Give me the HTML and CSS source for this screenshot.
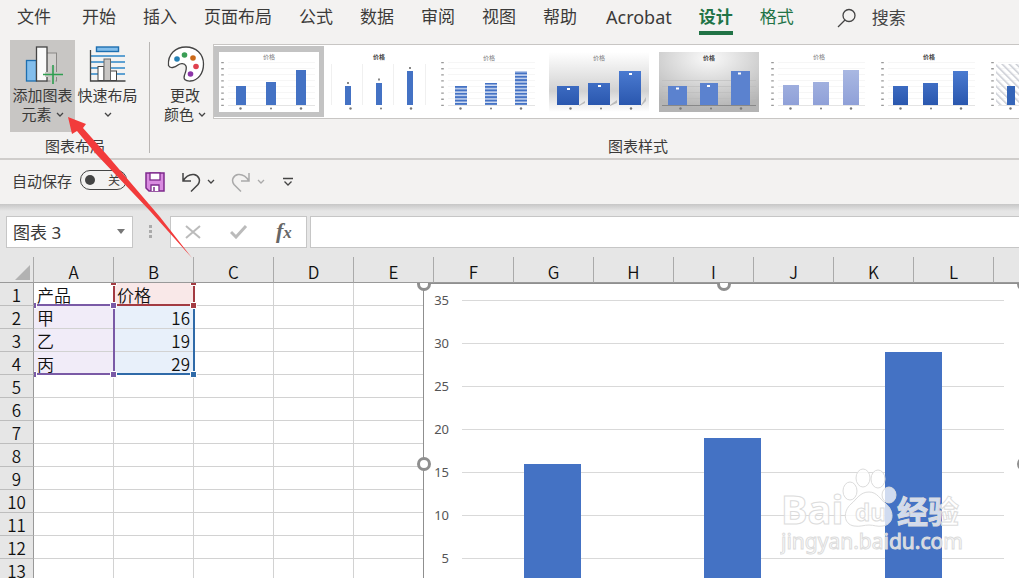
FILE: index.html
```html
<!DOCTYPE html>
<html lang="zh-CN">

<head>
    <meta charset="UTF-8">
    <meta name="viewport" content="width=device-width, initial-scale=1.0">
    <title>图表 3</title>
    <link rel="stylesheet" href="styles.css">
</head>

<body>
    <nav class="tabs">
        <button class="tab tab-file">文件</button>
        <button class="tab">开始</button>
        <button class="tab">插入</button>
        <button class="tab">页面布局</button>
        <button class="tab">公式</button>
        <button class="tab">数据</button>
        <button class="tab">审阅</button>
        <button class="tab">视图</button>
        <button class="tab">帮助</button>
        <button class="tab tab-latin">Acrobat</button>
        <button class="tab active">设计</button>
        <button class="tab context">格式</button>
        <label class="search">
            <svg width="20" height="20" viewBox="0 0 20 20" fill="none" stroke="#444" stroke-width="1.3">
                <circle cx="12" cy="7.5" r="6" />
                <path d="M8 12L1 19" />
            </svg>
            <input type="text" placeholder="搜索" aria-label="搜索">
        </label>
    </nav>

    <section class="ribbon">
        <div class="group">
            <div class="group-body">
                <button class="big-button pressed">
                    <svg width="40" height="40" viewBox="0 0 40 40">
                        <rect x="23.5" y="9" width="10" height="28" fill="#d2d0ce" stroke="#8a8886" />
                        <rect x="3.5" y="16.5" width="10" height="20.500" fill="#83beec" stroke="#1e6fb0" stroke-width="1.3" />
                        <rect x="13.5" y="3" width="10.500" height="34" fill="#fafafa" stroke="#444" stroke-width="1.3" />
                        <path d="M30 22v18M22 30.500h17" stroke="#c8c6c4" stroke-width="5" />
                        <path d="M30 21v19M20 30.500h20" stroke="#2f9e50" stroke-width="1.6" />
                    </svg>
                    <span>添加图表</span>
                    <span>元素<svg class="chevron" width="8" height="6" viewBox="0 0 8 6"><path d="M1 1l3 3 3-3" /></svg></span>
                </button>
                <button class="big-button">
                    <svg width="40" height="40" viewBox="0 0 40 40">
                        <path d="M2 12h35M2 18h35M2 24h35M2 30h35" stroke="#2e87c8" stroke-width="1.5" />
                        <rect x="8.500" y="3" width="22" height="4.500" fill="#83beec" stroke="#1e6fb0" stroke-width="1.4" />
                        <rect x="10" y="22.500" width="6" height="14" fill="#fff" stroke="#444" />
                        <rect x="22.500" y="27" width="6" height="9.500" fill="#fff" stroke="#444" />
                        <rect x="16" y="15" width="6.500" height="21.500" fill="#c8c6c4" stroke="#666" />
                        <path d="M2.500 6v31h35" fill="none" stroke="#444" stroke-width="1.3" />
                    </svg>
                    <span>快速布局</span>
                    <span><svg class="chevron" width="8" height="6" viewBox="0 0 8 6"><path d="M1 1l3 3 3-3" /></svg></span>
                </button>
            </div>
            <div class="group-name">图表布局</div>
        </div>

        <div class="divider"></div>

        <div class="group">
            <div class="group-body">
                <button class="big-button narrow">
                    <svg width="40" height="40" viewBox="0 0 40 40">
                        <path d="M3.500 21.500C2.500 10 10.500 3 21 3c10 0 17.500 7 17.500 17 0 9.500-5.500 16.500-13 17-5 .3-7.500-1.500-6-6 1.500-4 2.500-6 1.500-9-1.500-3-5.500-3-8-1-3 2.500-8 4-9.500.5z" fill="#fff" stroke="#444" stroke-width="1.3" />
                        <circle cx="12" cy="15" r="2.800" fill="#2580b5" />
                        <circle cx="19.500" cy="11" r="2.800" fill="#3a9e55" />
                        <circle cx="28" cy="14" r="2.800" fill="#cc6a1a" />
                        <circle cx="31" cy="22.500" r="2.800" fill="#e0414e" />
                        <circle cx="25.500" cy="30" r="2.800" fill="#8c35a8" />
                    </svg>
                    <span>更改</span>
                    <span>颜色<svg class="chevron" width="8" height="6" viewBox="0 0 8 6"><path d="M1 1l3 3 3-3" /></svg></span>
                </button>

                <!-- shared parts of the style previews -->
                <svg width="0" height="0" class="defs">
                    <defs>
                        <linearGradient id="shade" x2="0" y2="1">
                            <stop offset="0" stop-color="#4a7ad0" />
                            <stop offset="1" stop-color="#2a57ae" />
                        </linearGradient>
                        <linearGradient id="pale" x2="0" y2="1">
                            <stop offset="0" stop-color="#a9b8e2" />
                            <stop offset="1" stop-color="#8fa0d8" />
                        </linearGradient>
                        <linearGradient id="floor" x2="0" y2="1">
                            <stop offset="0" stop-color="#fff" />
                            <stop offset=".65" stop-color="#d2d2d2" />
                            <stop offset="1" stop-color="#fff" />
                        </linearGradient>
                        <radialGradient id="spot" cx=".5" cy=".1" r=".85">
                            <stop offset="0" stop-color="#fafafa" />
                            <stop offset="1" stop-color="#b4b4b4" />
                        </radialGradient>
                        <pattern id="stripes" width="4" height="3.400" patternUnits="userSpaceOnUse">
                            <rect width="4" height="3.400" fill="#d5dff3" />
                            <rect width="4" height="2" fill="#4472c4" />
                        </pattern>
                        <pattern id="hatch" width="5" height="5" patternUnits="userSpaceOnUse" patternTransform="rotate(-45)">
                            <rect width="1.500" height="5" fill="#c9ccd3" />
                        </pattern>
                        <g id="scale">
                            <path d="M9 10.500h87M9 16.500h87M9 22.500h87M9 28.500h87M9 34.500h87M9 40.500h87M9 46.500h87" stroke="#f0f0f0" stroke-width=".6" />
                            <path d="M9 53.500h87" stroke="#ddd" stroke-width=".8" />
                            <path d="M3.500 10v44" stroke="#999" stroke-width="2.600" stroke-dasharray="1.300 4.800" />
                        </g>
                        <g id="names" fill="#777">
                            <circle cx="21.500" cy="56.500" r="1.200" />
                            <circle cx="52" cy="56.500" r="1" />
                            <circle cx="82" cy="56.500" r="1.200" />
                        </g>
                    </defs>
                </svg>

                <div class="gallery">
                    <button class="thumb selected" aria-label="样式 1">
                        <svg width="100" height="60" viewBox="0 0 100 60">
                            <use href="#scale" /><use href="#names" />
                            <text x="50" y="7">价格</text>
                            <path d="M17 34h10v19H17zM47 30h10v23H47zM77 18h10v35H77z" fill="#4472c4" />
                        </svg>
                    </button>
                    <button class="thumb" aria-label="样式 2">
                        <svg width="100" height="60" viewBox="0 0 100 60">
                            <use href="#names" />
                            <text x="50" y="7" class="strong">价格</text>
                            <path d="M2.500 12v41M33.500 12v41M64.500 12v41M96.500 12v41" stroke="#f0f0f0" />
                            <path d="M16 34h6v19h-6zM47 31h6v22h-6zM78 19h6v34h-6z" fill="#4472c4" />
                            <path d="M18 31h2M49 27.500h2M80 16h2" stroke="#888" stroke-width="2" />
                        </svg>
                    </button>
                    <button class="thumb" aria-label="样式 3">
                        <svg width="100" height="60" viewBox="0 0 100 60">
                            <use href="#scale" /><use href="#names" />
                            <text x="50" y="8">价格</text>
                            <path d="M16 34h12v19H16zM46 31h12v22H46zM76 19h12v34H76z" fill="url(#stripes)" />
                        </svg>
                    </button>
                    <button class="thumb" aria-label="样式 4">
                        <svg width="100" height="60" viewBox="0 0 100 60">
                            <rect width="100" height="60" fill="url(#floor)" />
                            <use href="#names" />
                            <text x="50" y="8">价格</text>
                            <path d="M30 53l6-4v2l-6 3zM61 53l7-5v3l-7 3zM92 53l5-8v4l-5 5z" fill="#bbb" />
                            <path d="M8 34h22v19H8zM39 31h22v22H39zM70 19h22v34H70z" fill="url(#shade)" />
                            <path d="M18 37h3M49 34h3M80 22h3" stroke="#fff" stroke-width="2" />
                        </svg>
                    </button>
                    <button class="thumb" aria-label="样式 5">
                        <svg width="100" height="60" viewBox="0 0 100 60">
                            <rect width="100" height="60" fill="url(#spot)" />
                            <path d="M3 28.500h94M3 34.500h94M3 40.500h94M3 46.500h94" stroke="#bbb" stroke-width=".6" />
                            <path d="M3 53.500h94" stroke="#888" />
                            <use href="#names" />
                            <text x="50" y="8" class="strong">价格</text>
                            <path d="M9 34h19v19H9zM41 31h18v22H41zM72 19h19v34H72z" fill="#5b82cf" />
                            <path d="M17 36.500h3M48 34h3M79 21.500h3" stroke="#fff" stroke-width="2" />
                        </svg>
                    </button>
                    <button class="thumb" aria-label="样式 6">
                        <svg width="100" height="60" viewBox="0 0 100 60">
                            <use href="#scale" /><use href="#names" />
                            <text x="50" y="7">价格</text>
                            <path d="M14 33h16v20H14zM44 30h16v23H44zM74 18h16v35H74z" fill="url(#pale)" />
                        </svg>
                    </button>
                    <button class="thumb" aria-label="样式 7">
                        <svg width="100" height="60" viewBox="0 0 100 60">
                            <use href="#scale" /><use href="#names" />
                            <text x="50" y="7" class="strong">价格</text>
                            <path d="M14 34h15v19H14zM44 31h15v22H44zM74 19h15v34H74z" fill="url(#shade)" />
                        </svg>
                    </button>
                    <button class="thumb" aria-label="样式 8">
                        <svg width="100" height="60" viewBox="0 0 100 60">
                            <use href="#scale" /><use href="#names" />
                            <rect x="7" y="12" width="90" height="41" fill="url(#hatch)" />
                            <path d="M18 34h8v19h-8zM48 31h8v22h-8zM78 19h8v34h-8z" fill="#3565b8" />
                        </svg>
                    </button>
                </div>
            </div>
            <div class="group-name">图表样式</div>
        </div>
    </section>

    <section class="quick-access">
        <label class="autosave">
            自动保存
            <span class="switch">
                <input type="checkbox">
                <span>关</span>
            </span>
        </label>
        <button class="icon-button save" aria-label="保存">
            <svg width="20" height="20" viewBox="0 0 20 20">
                <path d="M1 1h18v18H4l-3-3z" fill="#d98be0" stroke="#7d2a8c" stroke-width="1.500" />
                <rect x="5" y="1" width="10" height="7" fill="#fff" stroke="#7d2a8c" stroke-width="1.300" />
                <path d="M6 19v-6h8v6" fill="#fff" stroke="#7d2a8c" stroke-width="1.300" />
                <path d="M9 15v4" stroke="#7d2a8c" stroke-width="1.500" />
            </svg>
        </button>
        <button class="icon-button undo" aria-label="撤消">
            <svg width="20" height="20" viewBox="0 0 20 20" fill="none" stroke="#444" stroke-width="1.500">
                <path d="M2 1v8h8M2 9C5 4 9 2 13 2.500c5 1 7 6 4 10L10 19.500" />
            </svg>
            <svg class="chevron" width="8" height="6" viewBox="0 0 8 6"><path d="M1 1l3 3 3-3" /></svg>
        </button>
        <button class="icon-button redo" aria-label="恢复" disabled>
            <svg width="20" height="20" viewBox="0 0 20 20" fill="none" stroke="#aaa" stroke-width="1.500">
                <path d="M18 1v8h-8M18 9C15 4 11 2 7 2.500c-5 1-7 6-4 10L10 19.500" />
            </svg>
            <svg class="chevron" width="8" height="6" viewBox="0 0 8 6"><path d="M1 1l3 3 3-3" /></svg>
        </button>
        <button class="icon-button more" aria-label="自定义快速访问工具栏">
            <svg width="10" height="10" viewBox="0 0 10 10" fill="none" stroke="#444" stroke-width="1.300">
                <path d="M0 1.500h10M1.500 4.500L5 8l3.500-3.500" />
            </svg>
        </button>
    </section>

    <section class="formula-bar">
        <div class="name-box">
            <input type="text" value="图表 3" aria-label="名称框">
            <svg width="8" height="5" viewBox="0 0 8 5"><path d="M0 0h8L4 5z" fill="#777" /></svg>
        </div>
        <svg class="grip" width="4" height="14" viewBox="0 0 4 14" fill="#aaa">
            <path d="M0 0h3v3H0zM0 5h3v3H0zM0 10h3v3H0z" />
        </svg>
        <div class="formula-buttons">
            <button aria-label="取消">
                <svg width="16" height="14" viewBox="0 0 16 14" stroke="#bbb" stroke-width="2"><path d="M1 1l14 12M15 1L1 13" /></svg>
            </button>
            <button aria-label="输入">
                <svg width="18" height="14" viewBox="0 0 18 14" fill="none" stroke="#bbb" stroke-width="3"><path d="M1 7l5 5L16 1" /></svg>
            </button>
            <button class="fx" aria-label="插入函数">f<small>x</small></button>
        </div>
        <input type="text" class="formula" aria-label="编辑栏">
    </section>

    <main class="sheet">
        <table>
            <thead>
                <tr>
                    <th class="corner"><svg width="15" height="15" viewBox="0 0 15 15"><path d="M15 0v15H0z" fill="#b2b2b2" /></svg></th>
                    <th>A</th><th>B</th><th>C</th><th>D</th><th>E</th><th>F</th><th>G</th>
                    <th>H</th><th>I</th><th>J</th><th>K</th><th>L</th><th></th>
                </tr>
            </thead>
            <tbody>
                <tr><th>1</th><td>产品</td><td class="title-cell">价格</td><td></td><td></td><td></td><td></td><td></td><td></td><td></td><td></td><td></td><td></td><td></td></tr>
                <tr><th>2</th><td class="name-cell">甲</td><td class="value-cell">16</td><td></td><td></td><td></td><td></td><td></td><td></td><td></td><td></td><td></td><td></td><td></td></tr>
                <tr><th>3</th><td class="name-cell">乙</td><td class="value-cell">19</td><td></td><td></td><td></td><td></td><td></td><td></td><td></td><td></td><td></td><td></td><td></td></tr>
                <tr><th>4</th><td class="name-cell">丙</td><td class="value-cell">29</td><td></td><td></td><td></td><td></td><td></td><td></td><td></td><td></td><td></td><td></td><td></td></tr>
                <tr><th>5</th><td></td><td></td><td></td><td></td><td></td><td></td><td></td><td></td><td></td><td></td><td></td><td></td><td></td></tr>
                <tr><th>6</th><td></td><td></td><td></td><td></td><td></td><td></td><td></td><td></td><td></td><td></td><td></td><td></td><td></td></tr>
                <tr><th>7</th><td></td><td></td><td></td><td></td><td></td><td></td><td></td><td></td><td></td><td></td><td></td><td></td><td></td></tr>
                <tr><th>8</th><td></td><td></td><td></td><td></td><td></td><td></td><td></td><td></td><td></td><td></td><td></td><td></td><td></td></tr>
                <tr><th>9</th><td></td><td></td><td></td><td></td><td></td><td></td><td></td><td></td><td></td><td></td><td></td><td></td><td></td></tr>
                <tr><th>10</th><td></td><td></td><td></td><td></td><td></td><td></td><td></td><td></td><td></td><td></td><td></td><td></td><td></td></tr>
                <tr><th>11</th><td></td><td></td><td></td><td></td><td></td><td></td><td></td><td></td><td></td><td></td><td></td><td></td><td></td></tr>
                <tr><th>12</th><td></td><td></td><td></td><td></td><td></td><td></td><td></td><td></td><td></td><td></td><td></td><td></td><td></td></tr>
                <tr><th>13</th><td></td><td></td><td></td><td></td><td></td><td></td><td></td><td></td><td></td><td></td><td></td><td></td><td></td></tr>
            </tbody>
        </table>

        <!-- objects floating over the cells -->
        <div class="objects">
            <svg class="ranges" width="170" height="100" viewBox="0 0 170 100" fill="none" stroke-width="2">
                <path d="M80 2v20M160 2v20M80 22h80" stroke="#a33b42" />
                <path d="M160 24v67H80" stroke="#2f6aa8" />
                <path d="M0 22h80v69H0" stroke="#7a5aa6" />
                <g stroke="#fff" stroke-width="1">
                    <path d="M76.500-2.500h6v5h-6zM156.500-2.500h6v5h-6zM156.500 19.500h6v6h-6z" fill="#a33b42" />
                    <path d="M76.500 19.500h6v6h-6zM76.500 88.500h6v6h-6zM-3.500 19.500h6v6h-6zM-3.500 88.500h6v6h-6z" fill="#7a5aa6" />
                    <path d="M156.500 88.500h6v6h-6z" fill="#2f6aa8" />
                </g>
            </svg>

            <div class="chart">
                <div class="axis">
                    <span>35</span><span>30</span><span>25</span><span>20</span>
                    <span>15</span><span>10</span><span>5</span>
                </div>
                <div class="plot">
                    <div class="lines"><i></i><i></i><i></i><i></i><i></i><i></i><i></i></div>
                    <div class="bars">
                        <div class="bar" style="height: 45.71%"></div>
                        <div class="bar" style="height: 54.29%"></div>
                        <div class="bar" style="height: 82.86%"></div>
                    </div>
                </div>
                <b class="handle top left"></b>
                <b class="handle top center"></b>
                <b class="handle top right"></b>
                <b class="handle middle left"></b>
                <b class="handle middle right"></b>
            </div>
        </div>
    </main>

    <svg class="arrow" width="200" height="270" viewBox="0 0 200 270">
        <path d="M68 117L86 124 83 128 107 155 160 217 192 258 150 211 97 155 77 131 72 134z" fill="#f23b3b" />
    </svg>

    <svg class="watermark" width="190" height="94" viewBox="0 0 190 94">
        <g fill="#fff" fill-opacity=".75" stroke="#dcdcdc">
            <text x="1" y="58" class="wm-brand">Bai</text>
            <ellipse cx="70" cy="25" rx="7" ry="9" />
            <ellipse cx="83" cy="12" rx="7" ry="9" />
            <ellipse cx="98" cy="13" rx="7" ry="9" />
            <ellipse cx="109" cy="29" rx="7" ry="8" />
            <path d="M89 26c8 0 11 7 17 12 8 6 9 20-3 22-6 1-9-1-14-1s-9 2-15 1c-11-2-11-15-3-22 6-5 9-12 18-12z" />
            <text x="75" y="55" class="wm-du">du</text>
            <text x="117" y="57" class="wm-cn">经验</text>
            <text x="1" y="83" class="wm-url">jingyan.baidu.com</text>
        </g>
    </svg>
</body>

</html>
```

FILE: styles.css
```css
* {
    box-sizing: border-box;
}

body {
    margin: 0;
    height: 100vh;
    display: flex;
    flex-direction: column;
    position: relative;
    overflow: hidden;
    background-color: #f3f2f1;
    color: #3b3a39;
    font-family: "Noto Sans", "Noto Sans CJK SC", sans-serif;
    font-size: 15px;
}

button,
input {
    margin: 0;
    padding: 0;
    border: none;
    background: none;
    color: inherit;
    font: inherit;
}

svg {
    display: block;
    flex: none;
}

.chevron {
    fill: none;
    stroke: #444;
    stroke-width: 1.3;
}

/* tabs */
.tabs {
    display: flex;
    align-items: flex-start;
    gap: 27px;
    height: 40px;
    padding-left: 17px;
    font-size: 17px;
    line-height: 24px;
}

.tab {
    padding: 5px 0 2px;
    white-space: nowrap;
}

.tab-file {
    margin-right: 4px;
}

.tab-latin {
    margin-left: 2px;
    font-size: 18px;
}

.tab.active {
    color: #217346;
    font-weight: bold;
    border-bottom: 4px solid #217346;
}

.tab.context {
    color: #217346;
}

.search {
    display: flex;
    align-items: center;
    gap: 15px;
    padding-top: 6px;
    margin-left: 16px;
}

.search input {
    width: 100px;
    height: 24px;
}

.search input::placeholder {
    color: #444;
    opacity: 1;
}

/* ribbon */
.ribbon {
    display: flex;
    flex: none;
    height: 120px;
    padding-left: 10px;
    overflow: hidden;
    border-bottom: 2px solid #cfcdcb;
}

.group {
    flex: none;
    display: flex;
    flex-direction: column;
}

.group-body {
    display: flex;
    height: 95px;
}

.group-name {
    text-align: center;
    line-height: 22px;
}

.big-button {
    display: flex;
    flex-direction: column;
    align-items: center;
    width: 65px;
    height: 92px;
    padding-top: 4px;
    line-height: 19px;
    white-space: nowrap;
}

.big-button > svg {
    margin-bottom: 2px;
}

.big-button span {
    display: flex;
    align-items: center;
    gap: 4px;
    min-height: 19px;
}

.big-button.narrow {
    width: 56px;
}

.big-button.pressed {
    background-color: #c8c6c4;
}

.divider {
    flex: none;
    width: 1px;
    height: 111px;
    margin: 2px 7px 0 9px;
    background-color: #b8b6b4;
}

.defs {
    position: absolute;
}

.gallery {
    display: flex;
    height: 75px;
    margin-top: 4px;
    padding: 1px 24px 1px 0;
    background-color: #fff;
    border: 1px solid #c8c6c4;
}

.thumb {
    width: 110px;
    height: 71px;
    padding: 5px;
}

.thumb.selected {
    background-color: #c3c3c3;
}

.thumb.selected svg {
    background-color: #fff;
}

.thumb text {
    font-size: 6px;
    fill: #777;
    text-anchor: middle;
}

.thumb .strong {
    font-weight: bold;
    fill: #444;
}

/* quick access toolbar */
.quick-access {
    display: flex;
    align-items: center;
    flex: none;
    height: 44px;
    padding-left: 12px;
}

.autosave {
    display: flex;
    align-items: center;
    gap: 8px;
    padding-bottom: 4px;
}

.switch {
    display: grid;
    align-items: center;
    width: 47px;
    height: 20px;
}

.switch > * {
    grid-area: 1 / 1;
}

.switch span {
    justify-self: end;
    padding-right: 7px;
    font-size: 12px;
}

.switch input {
    appearance: none;
    width: 47px;
    height: 20px;
    padding: 4px;
    border: 1px solid #444;
    border-radius: 10px;
}

.switch input::before {
    content: "";
    display: block;
    width: 10px;
    height: 10px;
    border-radius: 50%;
    background-color: #444;
}

.icon-button {
    display: flex;
    align-items: center;
    gap: 6px;
}

.save {
    margin-left: 18px;
}

.undo,
.redo {
    margin-left: 16px;
}

.redo .chevron {
    stroke: #aaa;
}

.more {
    margin-left: 18px;
}

/* formula bar */
.formula-bar {
    display: flex;
    align-items: center;
    flex: none;
    height: 53px;
    padding: 3px 0 0 6px;
    background: linear-gradient(#c6c6c6, #e6e6e6 7px);
    font-size: 17px;
}

.name-box,
.formula-buttons,
.formula {
    height: 32px;
    background-color: #fff;
    border: 1px solid #c6c6c6;
}

.name-box {
    display: flex;
    align-items: center;
    width: 127px;
    padding: 0 7px 2px 6px;
}

.name-box input {
    flex: 1;
    min-width: 0;
}

.grip {
    margin: 0 17px 0 16px;
}

.formula-buttons {
    display: flex;
    align-items: center;
    justify-content: space-around;
    width: 137px;
}

.fx {
    font-family: "Liberation Serif", serif;
    font-size: 22px;
    line-height: 24px;
    font-style: italic;
    font-weight: bold;
    color: #666;
}

.fx small {
    font-size: 17px;
}

.formula {
    flex: 1;
    min-width: 0;
    margin-left: 3px;
    border-right: none;
}

/* sheet */
.sheet {
    flex: 1;
    min-height: 0;
    position: relative;
    overflow: hidden;
    background-color: #fff;
    color: #111;
    font-family: "Noto Sans CJK SC", sans-serif;
    font-size: 17px;
    font-weight: 350;
}

.sheet table {
    width: 1074px;
    table-layout: fixed;
    border-spacing: 0;
}

.sheet th,
.sheet td {
    height: 23px;
    padding: 2px 3px 0;
    line-height: 20px;
    border-right: 1px solid #d2d2d2;
    border-bottom: 1px solid #d2d2d2;
}

.sheet th {
    padding: 2px 0 0;
    font-weight: 350;
    background-color: #e6e6e6;
    border-bottom-color: #bdbdbd;
}

.sheet tbody th {
    border-right-color: #999;
}

.sheet thead th {
    width: 80px;
    height: 26px;
    padding-top: 5px;
    border-right-color: #aaa;
    border-bottom-color: #999;
}

.sheet thead .corner {
    width: 34px;
    padding: 5px 0 0 15px;
}

.sheet .title-cell {
    background-color: #f9e8e8;
}

.sheet .name-cell {
    background-color: #f1ecf8;
}

.sheet .value-cell {
    background-color: #e8f0fa;
    text-align: right;
}

.objects {
    position: absolute;
    inset: 26px 0 0 34px;
    overflow: hidden;
}

.ranges {
    position: absolute;
    top: 0;
    left: 0;
}

/* chart */
.chart {
    position: absolute;
    top: 0;
    left: 389px;
    display: flex;
    width: 602px;
    height: 362px;
    padding: 16px 20px 0 8px;
    background-color: #fff;
    border: 1px solid #8f8f8f;
    color: #555;
    font-family: "Noto Sans", sans-serif;
    font-size: 13px;
    font-weight: normal;
}

.axis {
    display: flex;
    flex-direction: column;
    width: 30px;
    margin-top: -21px;
    padding-right: 13px;
    text-align: right;
    line-height: 43px;
}

.axis span {
    height: 43px;
}

.plot {
    flex: 1;
    display: grid;
    height: 302px;
}

.lines,
.bars {
    grid-area: 1 / 1;
}

.lines i {
    display: block;
    height: 43px;
    border-top: 1px solid #d9d9d9;
}

.bars {
    display: flex;
    align-items: flex-end;
    justify-content: space-around;
}

.bar {
    width: 57px;
    background-color: #4472c4;
}

.handle {
    position: absolute;
    width: 14px;
    height: 14px;
    border: 3px solid #8f8f8f;
    border-radius: 50%;
    background-color: #fff;
}

.handle.top {
    top: -7px;
}

.handle.middle {
    top: 173px;
}

.handle.left {
    left: -7px;
}

.handle.center {
    left: 293px;
}

.handle.right {
    right: -7px;
}

/* marks drawn over the whole window */
.arrow {
    position: absolute;
    top: 0;
    left: 0;
    pointer-events: none;
}

.watermark {
    position: absolute;
    right: 49px;
    bottom: 18px;
    pointer-events: none;
}

.watermark text {
    font-family: "Noto Sans", "Noto Sans CJK SC", sans-serif;
}

.wm-brand {
    font-size: 40px;
    font-weight: bold;
}

.wm-du {
    font-size: 24px;
    font-weight: bold;
}

.wm-cn {
    font-size: 31px;
    font-weight: bold;
}

.wm-url {
    font-size: 21px;
}
```
